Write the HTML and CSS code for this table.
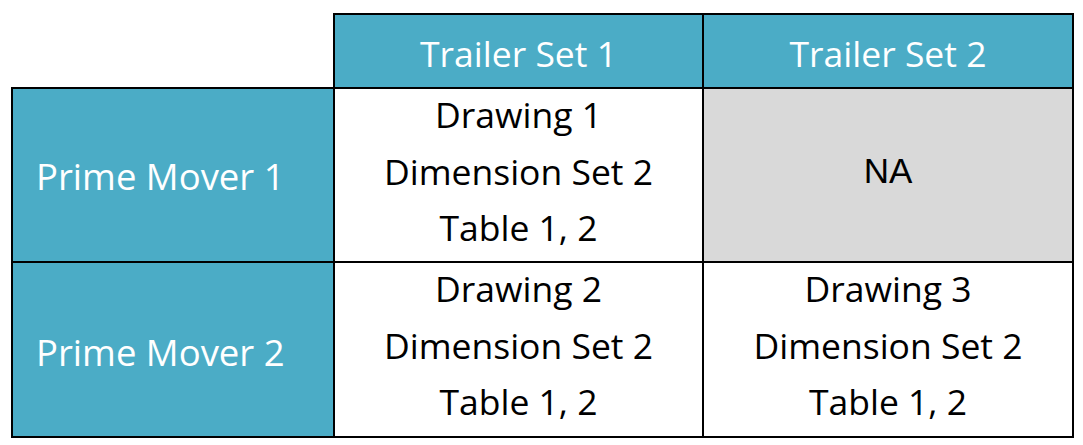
FILE: index.html
```html
<!DOCTYPE html>
<html>
<head>
<meta charset="utf-8">
<link rel="stylesheet" href="styles.css">
</head>
<body>
<table class="grid">
  <colgroup>
    <col class="c1"><col class="c2"><col class="c3">
  </colgroup>
  <tr class="head">
    <td class="corner"></td>
    <td class="hdr">Trailer Set 1</td>
    <td class="hdr">Trailer Set 2</td>
  </tr>
  <tr class="r1">
    <td class="label">Prime Mover 1</td>
    <td class="cell"><div class="lines"><div class="ln">Drawing 1</div><div class="ln">Dimension Set 2</div><div class="ln">Table 1, 2</div></div></td>
    <td class="cell na">NA</td>
  </tr>
  <tr class="r2">
    <td class="label">Prime Mover 2</td>
    <td class="cell"><div class="lines"><div class="ln">Drawing 2</div><div class="ln">Dimension Set 2</div><div class="ln">Table 1, 2</div></div></td>
    <td class="cell"><div class="lines"><div class="ln">Drawing 3</div><div class="ln">Dimension Set 2</div><div class="ln">Table 1, 2</div></div></td>
  </tr>
</table>
</body>
</html>
```
FILE: styles.css
```css
html, body {
  margin: 0;
  padding: 0;
  background: #ffffff;
}
body {
  padding: 13px 0 0 11px;
  font-family: "Open Sans", "Liberation Sans", sans-serif;
}
.grid {
  border-collapse: collapse;
  table-layout: fixed;
  width: 1061px;
}
.c1 { width: 322px; }
.c2 { width: 369px; }
.c3 { width: 370px; }
.grid td {
  border: 2px solid #000;
  padding: 0;
  font-size: 35.5px;
  line-height: 56.5px;
  color: #000;
  text-align: center;
  vertical-align: middle;
}
.head { height: 74px; }
.r1 { height: 174px; }
.r2 { height: 175px; }
.grid td.cell {
  vertical-align: top;
}
.lines {
  margin-top: -3px;
  height: 160px;
}
.grid td.na {
  vertical-align: middle;
  background: #d9d9d9;
  font-family: "Liberation Sans", Arial, sans-serif;
  font-size: 35px;
  padding-bottom: 8px;
}
.grid td.corner {
  border-top-style: hidden;
  border-left-style: hidden;
  background: #fff;
}
.grid td.hdr {
  background: #4bacc6;
  color: #fff;
  padding-top: 5px;
}
.grid td.label {
  background: #4bacc6;
  color: #fff;
  text-align: left;
  font-size: 36.5px;
  padding-left: 23px;
  padding-top: 2px;
}
.r2 td.label {
  padding-top: 5px;
}
```
